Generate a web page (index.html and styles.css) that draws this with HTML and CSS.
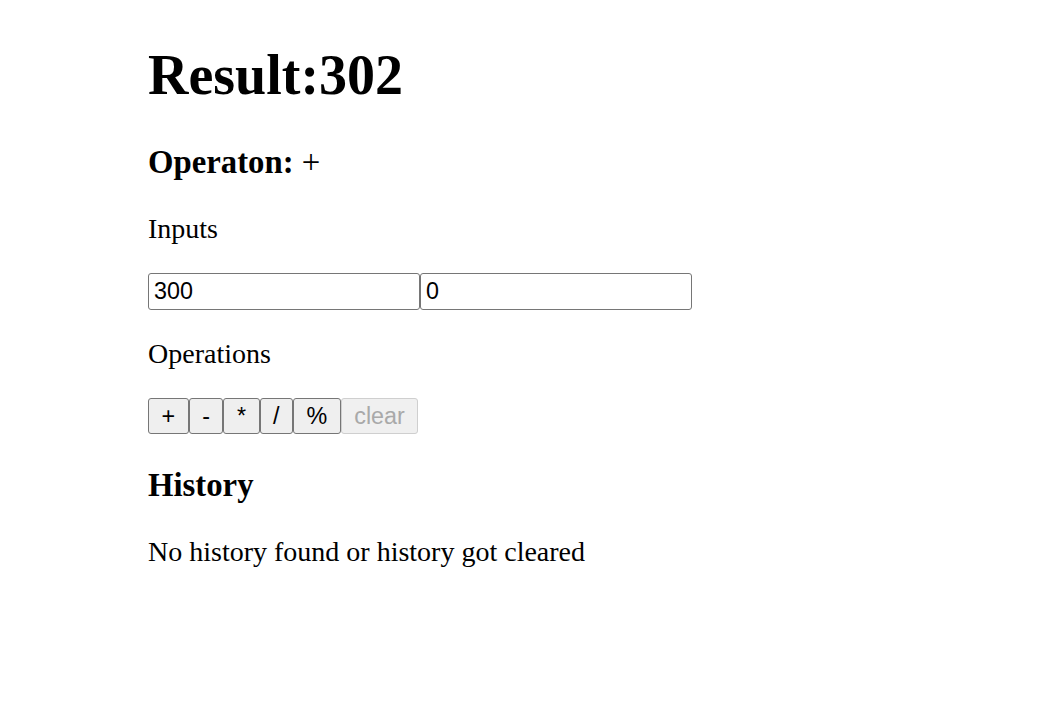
FILE: index.html
```html
<!DOCTYPE html>
<html lang="en">
<head>
<meta charset="utf-8">
<title>Calculator</title>
<link rel="stylesheet" href="styles.css">
</head>
<body>
<div class="app">
  <h1 class="title">Result:302</h1>
  <h3 class="section-title">Operaton: <span class="op">+</span></h3>
  <p class="label label-inputs">Inputs</p>
  <div class="inputs"><input class="num" type="text" value="300"><input class="num" type="text" value="0"></div>
  <p class="label label-ops">Operations</p>
  <div class="buttons">
    <button class="btn">+</button><button class="btn">-</button><button class="btn">*</button><button class="btn">/</button><button class="btn">%</button><button class="btn" disabled>clear</button>
  </div>
  <h3 class="section-title history-title">History</h3>
  <p class="label">No history found or history got cleared</p>
</div>
</body>
</html>
```

FILE: styles.css
```css
html, body {
  margin: 0;
  background: #fff;
}
body {
  font-family: "Liberation Serif", "Times New Roman", serif;
  color: #000;
}
.app {
  padding: 43px 0 0 148px;
}
.title {
  font-size: 56px;
  line-height: 64px;
  font-weight: bold;
  margin: 0 0 36px;
}
.section-title {
  font-size: 32.76px;
  line-height: 38px;
  font-weight: bold;
  margin: 0 0 32px;
}
.op {
  font-weight: normal;
}
.label {
  font-size: 28px;
  line-height: 32px;
  margin: 0 0 29.5px;
}
.label-inputs {
  margin-bottom: 27.5px;
}
.label-ops {
  margin-bottom: 27.5px;
}
.inputs {
  display: flex;
  margin-bottom: 28.5px;
}
.num {
  box-sizing: border-box;
  width: 272px;
  height: 37px;
  margin: 0;
  padding: 0 5px;
  font-family: "Liberation Sans", Arial, sans-serif;
  font-size: 23.33px;
  color: #000;
  background: #fff;
  border: 1px solid #767676;
  border-radius: 3px;
}
.buttons {
  display: flex;
  margin-bottom: 32px;
}
.btn {
  box-sizing: border-box;
  height: 36px;
  margin: 0;
  padding: 2px 12.5px 0;
  font-family: "Liberation Sans", Arial, sans-serif;
  font-size: 23.33px;
  color: #000;
  background: #efefef;
  border: 1px solid #767676;
  border-radius: 3px;
}
.btn:disabled {
  color: #a9a9a9;
  background: #f0f0f0;
  border-color: #cfcfcf;
}
.history-title {
  margin-bottom: 32.5px;
}
```
